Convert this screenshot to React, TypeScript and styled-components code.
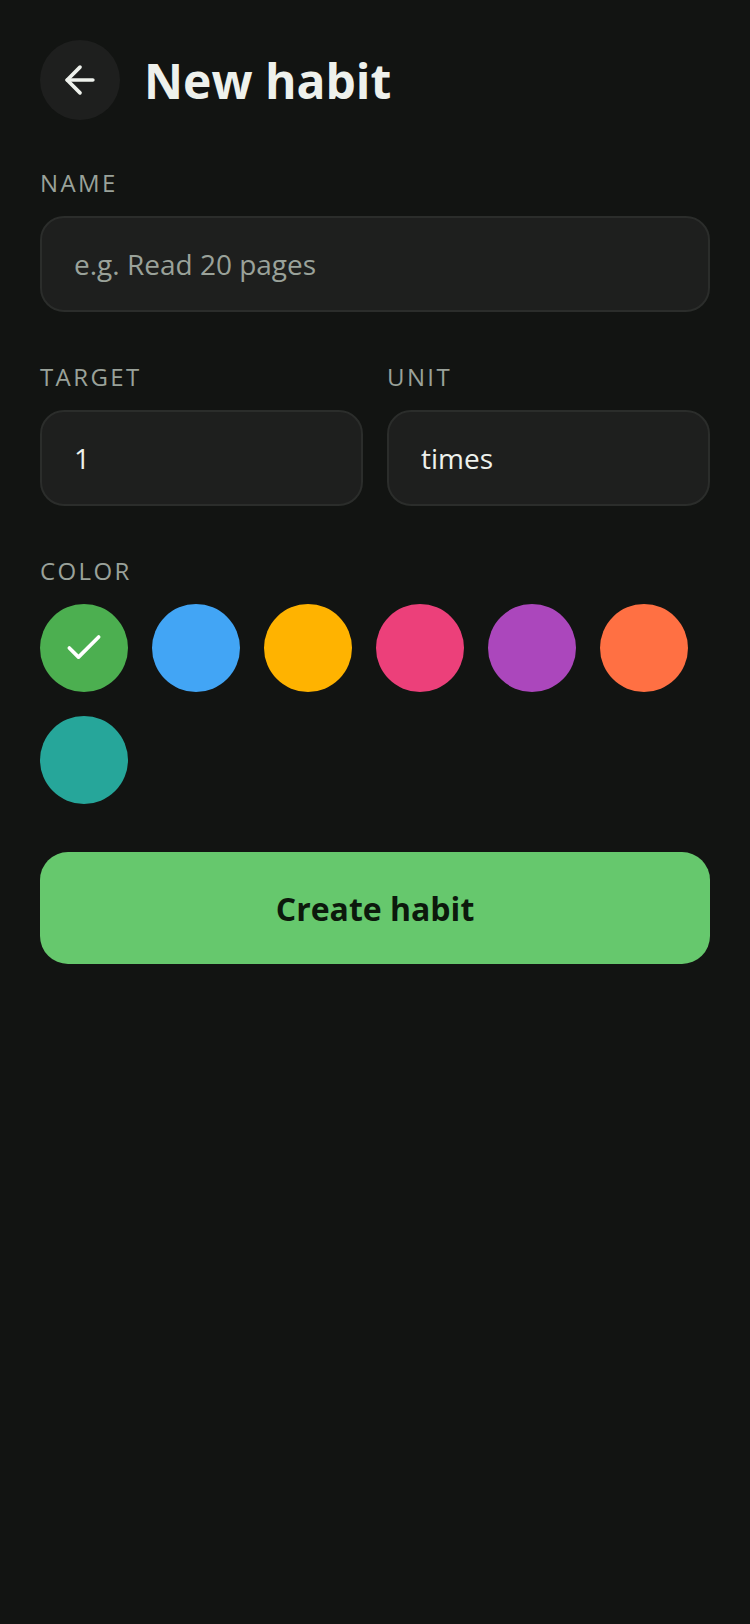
import styled, { createGlobalStyle } from 'styled-components';
import { ArrowLeft, Check } from 'lucide-react';

const COLORS = {
  page: '#121412',
  surface: '#1e1f1e',
  border: '#2b2d2b',
  text: '#eef1ec',
  muted: '#9aa29a',
  accent: '#66c86d',
};

const SWATCHES = ['#4caf50', '#42a5f5', '#ffb300', '#ec407a', '#ab47bc', '#ff7043', '#26a69a'];

const GlobalStyle = createGlobalStyle`
  * { box-sizing: border-box; }
  body {
    margin: 0;
    background: ${COLORS.page};
    font-family: "Open Sans", "Noto Sans", sans-serif;
    color: ${COLORS.text};
  }
`;

const Page = styled.div`
  min-height: 100vh;
  padding: 40px;
  display: flex;
  flex-direction: column;
`;

const Header = styled.header`
  display: flex;
  align-items: center;
  gap: 24px;
  margin-bottom: 46px;
`;

const BackButton = styled.button`
  width: 80px;
  height: 80px;
  border-radius: 50%;
  border: none;
  background: ${COLORS.surface};
  color: ${COLORS.text};
  display: flex;
  align-items: center;
  justify-content: center;
  padding: 0;
`;

const Title = styled.h1`
  margin: 0;
  font-size: 48px;
  font-weight: 700;
  color: ${COLORS.text};
`;

const Field = styled.div`
  display: flex;
  flex-direction: column;
  margin-bottom: 48px;
`;

const Label = styled.label`
  font-size: 24px;
  letter-spacing: 0.1em;
  text-transform: uppercase;
  color: ${COLORS.muted};
  margin-bottom: 17px;
`;

const Input = styled.input`
  height: 96px;
  width: 100%;
  padding: 0 32px;
  border: 2px solid ${COLORS.border};
  border-radius: 24px;
  background: ${COLORS.surface};
  color: ${COLORS.text};
  font-family: inherit;
  font-size: 28px;
  outline: none;

  &::placeholder {
    color: ${COLORS.muted};
  }
`;

const Row = styled.div`
  display: grid;
  grid-template-columns: 1fr 1fr;
  gap: 24px;
`;

const Swatches = styled.div`
  display: flex;
  flex-wrap: wrap;
  gap: 24px;
`;

const Swatch = styled.button<{ $color: string }>`
  width: 88px;
  height: 88px;
  border-radius: 50%;
  border: none;
  padding: 0;
  background: ${(p) => p.$color};
  color: #ffffff;
  display: flex;
  align-items: center;
  justify-content: center;
`;

const CreateButton = styled.button`
  height: 112px;
  width: 100%;
  border: none;
  border-radius: 28px;
  background: ${COLORS.accent};
  color: #0c190c;
  font-family: inherit;
  font-size: 32px;
  font-weight: 700;
`;

export default function App() {
  const selected = 0;
  return (
    <>
      <GlobalStyle />
      <Page>
        <Header>
          <BackButton aria-label="Back">
            <ArrowLeft size={44} strokeWidth={2} />
          </BackButton>
          <Title>New habit</Title>
        </Header>

        <Field>
          <Label>Name</Label>
          <Input placeholder="e.g. Read 20 pages" />
        </Field>

        <Row>
          <Field>
            <Label>Target</Label>
            <Input defaultValue="1" />
          </Field>
          <Field>
            <Label>Unit</Label>
            <Input defaultValue="times" />
          </Field>
        </Row>

        <Field>
          <Label>Color</Label>
          <Swatches>
            {SWATCHES.map((c, i) => (
              <Swatch key={c} $color={c} aria-label={c}>
                {i === selected && <Check size={44} strokeWidth={2} />}
              </Swatch>
            ))}
          </Swatches>
        </Field>

        <CreateButton>Create habit</CreateButton>
      </Page>
    </>
  );
}
